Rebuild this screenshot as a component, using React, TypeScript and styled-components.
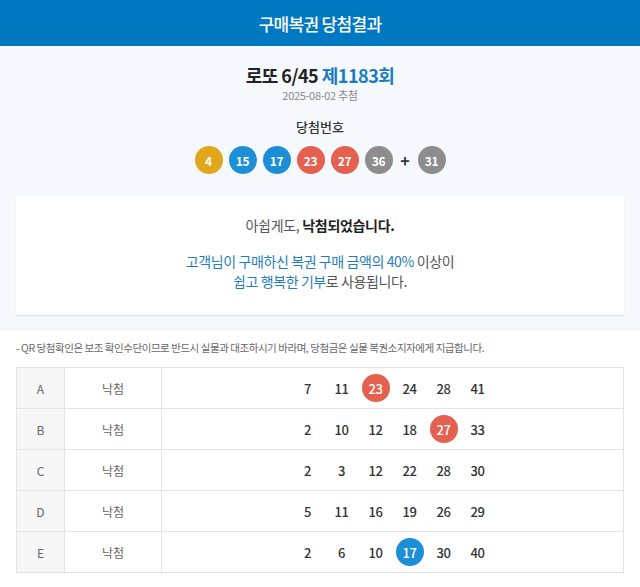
import { styled, createGlobalStyle } from 'styled-components';

const GlobalStyle = createGlobalStyle`
  html, body {
    margin: 0;
    padding: 0;
    background: #fff;
  }
  body {
    font-family: 'Noto Sans CJK KR', 'Noto Sans', sans-serif;
    color: #333;
  }
`;

type BallTone = 'yellow' | 'blue' | 'red' | 'gray' | 'green';

const toneColor: Record<BallTone, string> = {
  yellow: '#e2a61c',
  blue: '#1d8fd6',
  red: '#e4604f',
  gray: '#8d8d8d',
  green: '#84b43a',
};

const getTone = (n: number): BallTone => {
  if (n <= 10) return 'yellow';
  if (n <= 20) return 'blue';
  if (n <= 30) return 'red';
  if (n <= 40) return 'gray';
  return 'green';
};

const Page = styled.div`
  width: 640px;
`;

const Header = styled.header`
  height: 46px;
  background: #0079c2;
  color: #fff;
  display: flex;
  align-items: center;
  justify-content: center;
  font-size: 17px;
  font-weight: 500;
  letter-spacing: -0.7px;
`;

const Summary = styled.section`
  background: #f5f9fd;
  padding: 17px 16px 15px;
  display: flex;
  flex-direction: column;
  align-items: center;
`;

const Title = styled.h1`
  margin: 0;
  font-size: 18px;
  line-height: 24px;
  font-weight: 700;
  color: #222;
  letter-spacing: -0.5px;
`;

const Round = styled.span`
  color: #1a7cc1;
`;

const DrawDate = styled.div`
  font-size: 11px;
  line-height: 16px;
  color: #888;
  letter-spacing: -0.3px;
`;

const SubTitle = styled.div`
  margin-top: 15px;
  font-size: 13px;
  line-height: 18px;
  font-weight: 500;
  color: #333;
`;

const BallRow = styled.div`
  margin-top: 10px;
  display: flex;
  align-items: center;
  gap: 6px;
`;

const Ball = styled.span<{ $tone: BallTone }>`
  width: 28px;
  height: 28px;
  border-radius: 50%;
  background: ${({ $tone }) => toneColor[$tone]};
  color: #fff;
  font-size: 12px;
  font-weight: 700;
  display: flex;
  align-items: center;
  justify-content: center;
  letter-spacing: -0.3px;
`;

const Plus = styled.span`
  width: 13px;
  text-align: center;
  font-size: 16px;
  font-weight: 700;
  color: #333;
`;

const ResultCard = styled.div`
  margin-top: 22px;
  align-self: stretch;
  background: #fff;
  box-shadow: 0 1px 1px rgba(0, 0, 0, 0.1);
  padding: 19px 0 24px;
  text-align: center;
`;

const ResultLine = styled.p`
  margin: 0;
  font-size: 14px;
  line-height: 20px;
  color: #555;
  letter-spacing: -0.3px;
  b {
    color: #222;
    font-weight: 700;
  }
`;

const DonationText = styled.p`
  margin: 16px 0 0;
  font-size: 14px;
  line-height: 20px;
  color: #555;
  letter-spacing: -0.4px;
`;

const Accent = styled.span`
  color: #1f7dbd;
`;

const Notice = styled.p`
  margin: 10px 16px 0;
  font-size: 10.5px;
  line-height: 16px;
  color: #666;
  letter-spacing: -0.45px;
`;

const Table = styled.div`
  margin: 11px 16px 0;
  border-top: 1px solid #e3e3e3;
  border-left: 1px solid #e3e3e3;
`;

const Row = styled.div`
  display: grid;
  grid-template-columns: 48px 97px 1fr;
  height: 40px;
  border-bottom: 1px solid #e3e3e3;
`;

const Cell = styled.div<{ $head?: boolean }>`
  display: flex;
  align-items: center;
  justify-content: center;
  border-right: 1px solid #e3e3e3;
  background: ${({ $head }) => ($head ? '#f6f6f6' : '#fff')};
  font-size: 12px;
  color: #666;
`;

const NumberList = styled.div`
  display: flex;
  gap: 6px;
`;

const Pick = styled.span<{ $hit?: boolean; $tone: BallTone }>`
  width: 28px;
  height: 28px;
  border-radius: 50%;
  display: flex;
  align-items: center;
  justify-content: center;
  font-size: 13px;
  font-weight: 500;
  letter-spacing: -0.3px;
  color: ${({ $hit }) => ($hit ? '#fff' : '#333')};
  background: ${({ $hit, $tone }) => ($hit ? toneColor[$tone] : 'transparent')};
`;

const winning = [4, 15, 17, 23, 27, 36];
const bonus = 31;

const games: { label: string; result: string; numbers: number[] }[] = [
  { label: 'A', result: '낙첨', numbers: [7, 11, 23, 24, 28, 41] },
  { label: 'B', result: '낙첨', numbers: [2, 10, 12, 18, 27, 33] },
  { label: 'C', result: '낙첨', numbers: [2, 3, 12, 22, 28, 30] },
  { label: 'D', result: '낙첨', numbers: [5, 11, 16, 19, 26, 29] },
  { label: 'E', result: '낙첨', numbers: [2, 6, 10, 17, 30, 40] },
];

export default function App(): JSX.Element {
  return (
    <Page>
      <GlobalStyle />
      <Header>구매복권 당첨결과</Header>
      <Summary>
        <Title>
          로또 6/45 <Round>제1183회</Round>
        </Title>
        <DrawDate>2025-08-02 추첨</DrawDate>
        <SubTitle>당첨번호</SubTitle>
        <BallRow>
          {winning.map((n) => (
            <Ball key={n} $tone={getTone(n)}>
              {n}
            </Ball>
          ))}
          <Plus>+</Plus>
          <Ball $tone={getTone(bonus)}>{bonus}</Ball>
        </BallRow>
        <ResultCard>
          <ResultLine>
            아쉽게도, <b>낙첨되었습니다.</b>
          </ResultLine>
          <DonationText>
            <Accent>고객님이 구매하신 복권 구매 금액의 40%</Accent> 이상이
            <br />
            <Accent>쉽고 행복한 기부</Accent>로 사용됩니다.
          </DonationText>
        </ResultCard>
      </Summary>
      <Notice>
        - QR 당첨확인은 보조 확인수단이므로 반드시 실물과 대조하시기 바라며, 당첨금은 실물 복권소지자에게 지급합니다.
      </Notice>
      <Table>
        {games.map((g) => (
          <Row key={g.label}>
            <Cell $head>{g.label}</Cell>
            <Cell>{g.result}</Cell>
            <Cell>
              <NumberList>
                {g.numbers.map((n) => (
                  <Pick key={n} $hit={winning.includes(n)} $tone={getTone(n)}>
                    {n}
                  </Pick>
                ))}
              </NumberList>
            </Cell>
          </Row>
        ))}
      </Table>
    </Page>
  );
}
